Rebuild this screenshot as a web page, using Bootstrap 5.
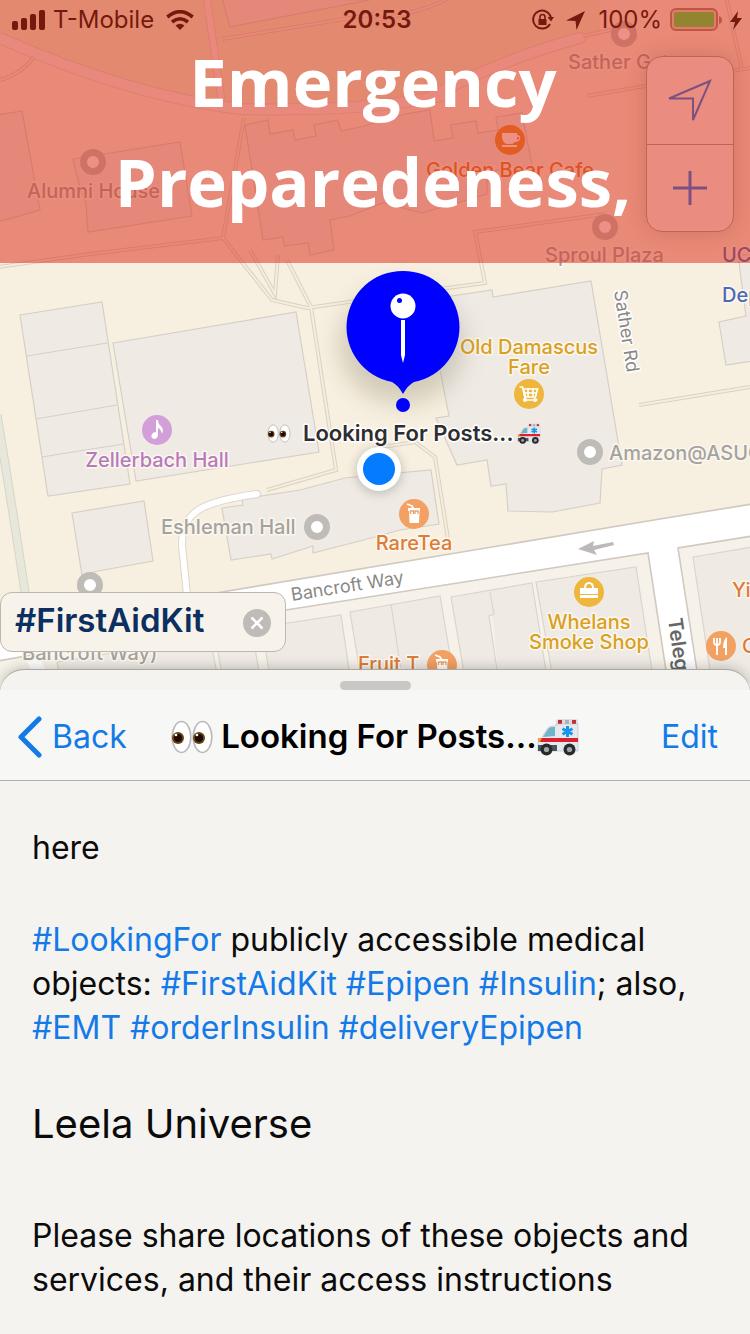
<!DOCTYPE html>
<html lang="en">
<head>
<meta charset="utf-8">
<meta name="viewport" content="width=device-width, initial-scale=1">
<title>Looking For Posts</title>
<link href="https://cdn.jsdelivr.net/npm/bootstrap@5.3.0/dist/css/bootstrap.min.css" rel="stylesheet">
<style>
  body { font-family: Inter, "Liberation Sans", sans-serif; color: #0b0b0b; background: #f5f3f0; }
  .hero { min-height: 682px; }
  .map { inset: 0; width: 100%; height: 100%; }
  .map text { font-family: Inter, sans-serif; font-size: 20px; font-weight: 500; paint-order: stroke; stroke: #fbf7ee; stroke-width: 3px; stroke-linejoin: round; }
  .map .street text { font-size: 18px; font-weight: 400; stroke: #fff; }
  .map .street .avenue { font-size: 20px; font-weight: 600; fill: #666; }
  .map .pin-name { font-size: 22px; font-weight: 600; stroke: #fff; }
  .banner { min-height: 263px; z-index: 2; pointer-events: none; }
  .banner-tint { inset: 0; background: rgba(221, 48, 26, .53); }
  .status { height: 40px; padding: 0 8px 0 12px; font-size: 24px; color: #000; }
  .banner h1 { font-family: "Open Sans", sans-serif; font-weight: 700; font-size: 67px; line-height: 100px; color: #fff; margin-top: -9px; padding: 0 112px 0 108px; }
  .controls { top: 56px; right: 16px; width: 88px; z-index: 1; border: 1px solid #a49f98; border-radius: 16px; background: #f8f4f2; overflow: hidden; box-shadow: 0 0 24px rgba(0, 0, 0, .2); }
  .controls button { height: 87px; border: 0; background: none; padding: 0; color: #1277f0; }
  .controls button + button { border-top: 1px solid #a49f98; }
  .tagbox { width: 286px; height: 60px; margin-bottom: 30px; padding: 0 14px 4px; border: 1px solid #bcb8b0; border-radius: 12px; background: #f7f2ea; z-index: 1; }
  .tagbox input { font-size: 33px; font-weight: 600; line-height: 40px; color: #0a2f60; border: 0; background: none; padding: 0; min-width: 0; outline: 0; }
  .clear { border: 0; background: none; padding: 0; line-height: 0; margin-top: 5px; }
  .sheet { margin-top: -13px; z-index: 3; border-top: 1px solid #aaa6a0; border-radius: 24px 24px 0 0; background: #f5f3f0; box-shadow: 0 -2px 12px rgba(0, 0, 0, .2); }
  .grip { width: 71px; height: 9px; margin: 11px auto 0; border-radius: 5px; background: #c9c8c6; }
  .bar { height: 91px; padding: 3px 18px 0; border-bottom: 1px solid #b0afae; background: #f7f7f6; }
  .bar a, .post a { color: #137ae8; text-decoration: none; }
  .bar a { font-size: 32px; }
  .bar .edit { margin-right: 14px; }
  .bar h2 { font-size: 33px; font-weight: 600; color: #000; }
  .post { padding: 45px 32px 32px; font-size: 32px; line-height: 44px; }
  .post p { margin-bottom: 48px; }
  .post h3 { font-size: 40px; font-weight: 400; line-height: 52px; margin: 0 0 64px; }
</style>
</head>
<body>
<svg width="0" height="0" class="position-absolute" aria-hidden="true">
  <defs>
    <symbol id="eyes" viewBox="0 0 42 34">
      <g fill="#fff" stroke="#b9b9bb" stroke-width="1.6"><ellipse cx="10.500" cy="17" rx="9.300" ry="15.500"/><ellipse cx="31.500" cy="17" rx="9.300" ry="15.500"/></g>
      <g fill="#6b4317"><circle cx="7" cy="18" r="6"/><circle cx="28" cy="18" r="6"/></g>
      <g fill="#1c0b03"><circle cx="7" cy="18" r="4"/><circle cx="28" cy="18" r="4"/></g>
      <g fill="#fff"><circle cx="5" cy="15" r="1.300"/><circle cx="26" cy="15" r="1.300"/></g>
    </symbol>
    <symbol id="ambulance" viewBox="0 0 42 38">
      <rect x="19" y="1" width="22" height="6" rx="2" fill="#dcdde0"/><rect x="21" y="2" width="4" height="4" fill="#c52c35"/><rect x="28" y="2" width="4" height="4" fill="#aeb1b7"/><rect x="35" y="2" width="4" height="4" fill="#c52c35"/>
      <path d="M19 6h22v27H1V24l4-5 5-8q2-3 6-3h3z" fill="#e6e9ec" stroke="#b9bec3" stroke-width=".6"/>
      <path d="M6 19l5-8q1-2 4-2h3v9z" fill="#6fb4c8"/><path d="M3 20h38v4H1z" fill="#d92231"/><path d="M1 27h19v6H1z" fill="#49545f"/><path d="M1 20h4l-2 4H1z" fill="#f29a38"/>
      <g stroke="#1696e8" stroke-width="3"><path d="M30.500 8v11M25.500 10.800l10 5.500M35.500 10.800l-10 5.500"/></g>
      <g fill="#282b2e"><circle cx="9.500" cy="31.500" r="6"/><circle cx="32.500" cy="31.500" r="6"/></g><g fill="#a3a6a8"><circle cx="9.500" cy="31.500" r="2.600"/><circle cx="32.500" cy="31.500" r="2.600"/></g>
    </symbol>
    <symbol id="juice" viewBox="0 0 30 30"><circle cx="15" cy="15" r="15" fill="#f3a163"/><path d="M8 5l5 2 1.500 3" fill="none" stroke="#fff" stroke-width="1.800"/><path d="M9 9h12v3h-.5L20 24H10.500L10 12H9z" fill="#fff"/><path d="M11.500 15v-3h3v3M16 15v-3h3v3" stroke="#f3a163" stroke-width="1.300" fill="none"/></symbol>
  </defs>
</svg>

<main>
  <section class="hero position-relative d-flex flex-column overflow-hidden">
    <svg class="map position-absolute" viewBox="0 0 750 682" preserveAspectRatio="xMidYMin slice" role="img" aria-label="Campus map">
      <rect width="750" height="682" fill="#f7efdf"/>
      <!-- lawn and upper roads -->
      <path d="M0 0H600V32Q540 48 445 95Q350 115 240 108Q130 95 0 36z" fill="#e9efcf"/>
      <g fill="none" stroke="#dfd5c8" stroke-width="12"><path d="M0 38Q130 96 240 109Q370 112 445 95"/><path d="M207 0L222 104" stroke-width="8"/><path d="M430 97Q505 58 580 38" stroke-linecap="round"/></g>
      <g fill="none" stroke="#f7eeee" stroke-width="10"><path d="M0 38Q130 96 240 109Q370 112 445 95"/><path d="M207 0L222 104" stroke-width="6"/><path d="M430 97Q505 58 580 38" stroke-linecap="round"/></g>
      <!-- buildings -->
      <g fill="#efebe4" stroke="#d5d0c7" stroke-width="1.200">
        <path d="M222-2L230 27L370 0zM-2 115L22 111L40 210L-2 222zM73 159L180 142L192 216L88 232L86 204L79 184z"/>
        <path d="M245 125L268 120L270 134L293 130L295 140L316 136L314 125L338 120L341 131L360 127L405 114L430 110L434 141L453 138L451 125L476 121L478 133L498 130L496 117L522 113L532 165L487 172V194L422 213L383 203L350 216L330 220L334 250L310 255L308 243L284 246L283 237L263 240z"/>
        <path d="M20 315L102 302L130 484L48 496zM27 356L107 343M36 419L117 405M42 457L123 444M113 343L296 312L319 452L136 481zM72 513L144 501L153 561L98 571L82 575z"/>
        <path d="M222 508L243 505L242 499L300 490L345 478L431 470L439 524L400 530L375 537L313 553V546L272 559L271 554L231 560z"/>
        <path d="M445 297L492 290L493 297L591 281L622 465L602 469L600 503L552 512L508 511L506 484L491 486L487 460L457 465L436 418L449 416L440 370z"/>
        <path d="M738 255L746 316L719 322L726 365L760 360V255z"/>
      </g>
      <!-- footpaths -->
      <defs><path id="walks" d="M-2 267L90 254L223 238L272 300L307 308L447 288L485 283L475 232L605 214M223 238L244 118M250 250L275 294L278 255M287 260L311 307L336 470L267 490M375 448L415 442L435 457L449 545M639 405L750 387M587 96L750 68M222 39L375 14M0 80Q20 75 34 57M375 20Q430 10 448-2M727 0L742 70M583 36L620 28"/></defs>
      <use href="#walks" fill="none" stroke="#d8d2c3" stroke-width="4"/><use href="#walks" fill="none" stroke="#f5eedf" stroke-width="2"/>
      <path d="M-3 415Q18 540 38 682" fill="none" stroke="#d5d5c9" stroke-width="9"/><path d="M-3 415Q18 540 38 682" fill="none" stroke="#e7e7dc" stroke-width="7"/>
      <path d="M257 494C200 502 182 512 182 545L188 605" fill="none" stroke="#dcd6cc" stroke-width="8" stroke-linecap="round"/><path d="M257 494C200 502 182 512 182 545L188 605" fill="none" stroke="#fff" stroke-width="6" stroke-linecap="round"/>
      <!-- Bancroft Way and Telegraph -->
      <path d="M-2 662L286 610L648 553L668 690H-2z" fill="#f7f2e9"/><path d="M678 548L752 536V690H699z" fill="#f7f2e9"/>
      <path d="M-2 628L222 592L660 519L752 504V536L678 548L700 690H669L648 553L286 610L-2 661z" fill="#fff" stroke="#cfc9c0" stroke-width="1.600"/>
      <g fill="#efebe4" stroke="#dad5cc" stroke-width="1.200">
        <path d="M57 662L210 637L220 690H62zM215 636L252 630L262 690H225zM262 627L341 615L352 690H272zM350 612L440 596L456 690H363zM391 604L404 690M451 597L532 583L549 690H467zM490 592L494 614L489 616L500 690M536 582L636 567L655 690H555zM693 557L752 547V690H713z"/>
      </g>
      <path d="M32 657L48 690" stroke="#fff" stroke-width="13"/>
      <!-- one-way arrow -->
      <path d="M578 549L594 541L593 546L613 542L614 545L594 550L597 555z" fill="#bcb9b8"/>
      <!-- plain place markers -->
      <g fill="#fff" stroke="#bfbcb7" stroke-width="7"><circle cx="624" cy="34" r="9.500"/><circle cx="93" cy="162" r="9.500"/><circle cx="605" cy="227" r="9.500"/><circle cx="590" cy="452" r="9.500"/><circle cx="317" cy="527" r="9.500"/><circle cx="90" cy="585" r="9.500"/></g>
      <g fill="#a5a29e">
        <text x="27" y="198">Alumni House</text><text x="568" y="69">Sather Gate</text><text x="545" y="262">Sproul Plaza</text>
        <text x="609" y="460">Amazon@ASUC</text><text x="161" y="534">Eshleman Hall</text><text x="22" y="660">Bancroft Way)</text>
      </g>
      <g fill="#4d68b4"><text x="722" y="262">UC Police</text><text x="722" y="302">Department</text></g>
      <g class="street" fill="#8a8886">
        <text transform="translate(614 291) rotate(81)">Sather Rd</text>
        <text transform="translate(292 601) rotate(-9)">Bancroft Way</text>
        <text class="avenue" transform="translate(668 619) rotate(82)">Telegraph Ave</text>
      </g>
      <!-- coloured places -->
      <circle cx="510" cy="140" r="15" fill="#e8902f"/><path d="M502 133h15v2q4 0 3 4-1 3-5 3-2 2-4 2h-4q-4-1-5-6zM517 137v3q2 0 2-3zM502 145h15v2h-15z" fill="#fff"/>
      <text x="510" y="177" text-anchor="middle" fill="#dd7c2c">Golden Bear Cafe</text>
      <circle cx="157" cy="430" r="15" fill="#d39fd9"/><path d="M156 420h2q0 4 3 6 3 3 1 8-1-5-4-6v6q0 5-4 5-4-1-2-5 1-2 4-2z" fill="#fff"/>
      <text x="157" y="467" text-anchor="middle" fill="#b67abc">Zellerbach Hall</text>
      <g text-anchor="middle" fill="#daa01f"><text x="529" y="354">Old Damascus</text><text x="529" y="374">Fare</text></g>
      <circle cx="529" cy="394" r="15" fill="#eeb63c"/><path d="M519.500 387h3l3 13h12M523.500 389h14l-2 8h-10zM528 388v9M533 388v9M524 393h12" fill="none" stroke="#fff" stroke-width="1.700"/><g fill="#fff"><circle cx="525" cy="400" r="2"/><circle cx="535" cy="400" r="2"/></g>
      <use href="#juice" x="399" y="499" width="30" height="30"/><text x="414" y="550" text-anchor="middle" fill="#dd7c38">RareTea</text>
      <use href="#juice" x="427" y="650" width="30" height="30"/><text x="358" y="671" fill="#dd7c38">Fruit T</text>
      <circle cx="589" cy="592" r="15" fill="#eeb63c"/><path d="M580 588h4q0-6 5-6t5 6h4v6h-18zM586 588h6q0-4-3-4t-3 4zM580 595h18v3h-18z" fill="#fff" fill-rule="evenodd"/>
      <g text-anchor="middle" fill="#daa01f"><text x="589" y="629">Whelans</text><text x="589" y="649">Smoke Shop</text></g>
      <text x="732" y="597" fill="#dd7c38">Yi Fang</text><text x="742" y="653" fill="#dd7c38">Chipotle</text>
      <circle cx="721" cy="646" r="15" fill="#f3a163"/><path d="M714 638v4q0 3 3 3t3-3v-4M717 638v17" fill="none" stroke="#fff" stroke-width="1.800"/><path d="M727 637v18h-2v-7h-2q0-8 4-11z" fill="#fff"/>
      <!-- selected pin -->
      <ellipse cx="402" cy="345" rx="62" ry="58" fill="#7e765f" opacity=".3" style="filter:blur(12px)"/>
      <path d="M403 271a56 56 0 0 1 11 111Q408 385 403 394Q398 385 392 382A56 56 0 0 1 403 271z" fill="#0000fe"/>
      <circle cx="403" cy="306" r="12.500" fill="#fff"/><circle cx="399.500" cy="300.500" r="2.500" fill="#0000fe"/><path d="M401 320h4v35l-2 8-2-8z" fill="#fff"/>
      <circle cx="403" cy="405" r="7" fill="#0000fe"/>
      <use href="#eyes" x="267" y="424" width="24" height="19"/>
      <text class="pin-name" x="303" y="441" fill="#2e2e30">Looking For Posts...</text>
      <use href="#ambulance" x="517" y="423" width="24" height="21"/>
      <circle cx="379" cy="471" r="24" fill="#555" opacity=".25" style="filter:blur(5px)"/><circle cx="379" cy="469" r="22" fill="#fff"/><circle cx="379" cy="469" r="16" fill="#057bff"/>
    </svg>

    <div class="controls position-absolute d-flex flex-column" role="group" aria-label="Map controls">
      <button type="button" class="d-flex align-items-center justify-content-center" aria-label="My location"><svg width="46" height="46" viewBox="0 0 46 46" fill="none" stroke="currentColor" stroke-width="2"><path d="M43 3L2 20.500H26V42z"/></svg></button>
      <button type="button" class="d-flex align-items-center justify-content-center" aria-label="Add post"><svg width="36" height="36" viewBox="0 0 36 36" stroke="currentColor" stroke-width="3"><path d="M1 18h34M18 1v34"/></svg></button>
    </div>

    <header class="banner position-relative">
      <div class="status d-flex align-items-center justify-content-between">
        <div class="d-flex align-items-center gap-2 col">
          <svg width="33" height="20" viewBox="0 0 33 20"><rect y="11" width="6" height="9" rx="2"/><rect x="9" y="8" width="6" height="12" rx="2"/><rect x="18" y="4" width="6" height="16" rx="2"/><rect x="27" width="6" height="20" rx="2"/></svg>
          <span>T-Mobile</span>
          <svg class="ms-1" width="28" height="20" viewBox="0 0 28 20" fill="none" stroke="#000" stroke-width="3.600"><path d="M1.300 7Q14-3.500 26.700 7M6 12Q14 5.500 22 12"/><path d="M14 20L9.500 15.500Q14 12 18.500 15.500z" fill="#000" stroke="none"/></svg>
        </div>
        <strong class="fw-semibold">20:53</strong>
        <div class="d-flex align-items-center justify-content-end gap-2 col">
          <svg width="22" height="22" viewBox="0 0 22 22" fill="none" stroke="#000" stroke-width="2"><path d="M18 15A9 9 0 1 1 19 9"/><path d="M15.500 8h6.500l-3 4.500z" fill="#000" stroke="none"/><path d="M6.500 10h8v6h-8z" fill="#000" stroke="none"/><path d="M8 10V8q0-2.500 2.500-2.500T13 8v2" stroke-width="1.600"/></svg>
          <svg class="ms-1 me-1" width="20" height="20" viewBox="0 0 20 20"><path d="M19 1L0 10.500L9.500 11L10.500 20z"/></svg>
          <span>100%</span>
          <svg width="52" height="24" viewBox="0 0 52 24"><rect x="1" y="1" width="46" height="21" rx="5" fill="#e6d3c4" stroke="#9d8274" stroke-width="2"/><rect x="4" y="4" width="40" height="15" rx="2" fill="#3fe34c"/><path d="M49 8q3 1 3 4t-3 4z" fill="#9d8274"/></svg>
          <svg width="12" height="19" viewBox="0 0 12 19"><path d="M8 0L0 11h5l-2 8L12 7H7z"/></svg>
        </div>
      </div>
      <div class="banner-tint position-absolute"></div>
      <h1 class="position-relative text-center mb-0">Emergency Preparedeness,</h1>
    </header>

    <form class="tagbox position-relative d-flex align-items-center mt-auto">
      <label class="visually-hidden" for="tag">Tag filter</label>
      <input id="tag" class="flex-grow-1" type="text" value="#FirstAidKit">
      <button class="clear" type="button" aria-label="Clear tag"><svg width="28" height="28" viewBox="0 0 28 28"><circle cx="14" cy="14" r="14" fill="#bfbcb8"/><path d="M8.500 8.500l11 11M19.500 8.500l-11 11" stroke="#fff" stroke-width="2.500"/></svg></button>
    </form>
  </section>

  <section class="sheet position-relative">
    <div class="grip"></div>
    <nav class="bar d-flex align-items-center justify-content-between" aria-label="Post">
      <div class="col"><a href="#back" class="d-flex align-items-center gap-2"><svg width="26" height="42" viewBox="0 0 26 42" fill="none" stroke="currentColor" stroke-width="5" stroke-linecap="round" stroke-linejoin="round"><path d="M21 3L3 21L21 39"/></svg>Back</a></div>
      <h2 class="d-flex align-items-center mb-0 text-nowrap"><svg class="me-2" width="42" height="34"><use href="#eyes"/></svg><span>Looking For Posts...</span><svg width="42" height="38"><use href="#ambulance"/></svg></h2>
      <div class="col text-end"><a class="edit" href="#edit">Edit</a></div>
    </nav>
    <article class="post">
      <p>here</p>
      <p><a href="#LookingFor">#LookingFor</a> publicly accessible medical objects: <a href="#FirstAidKit">#FirstAidKit</a> <a href="#Epipen">#Epipen</a> <a href="#Insulin">#Insulin</a>; also, <a href="#EMT">#EMT</a> <a href="#orderInsulin">#orderInsulin</a> <a href="#deliveryEpipen">#deliveryEpipen</a></p>
      <h3>Leela Universe</h3>
      <p class="mb-0">Please share locations of these objects and services, and their access instructions</p>
    </article>
  </section>
</main>
<script src="https://cdn.jsdelivr.net/npm/bootstrap@5.3.0/dist/js/bootstrap.bundle.min.js"></script>
</body>
</html>
